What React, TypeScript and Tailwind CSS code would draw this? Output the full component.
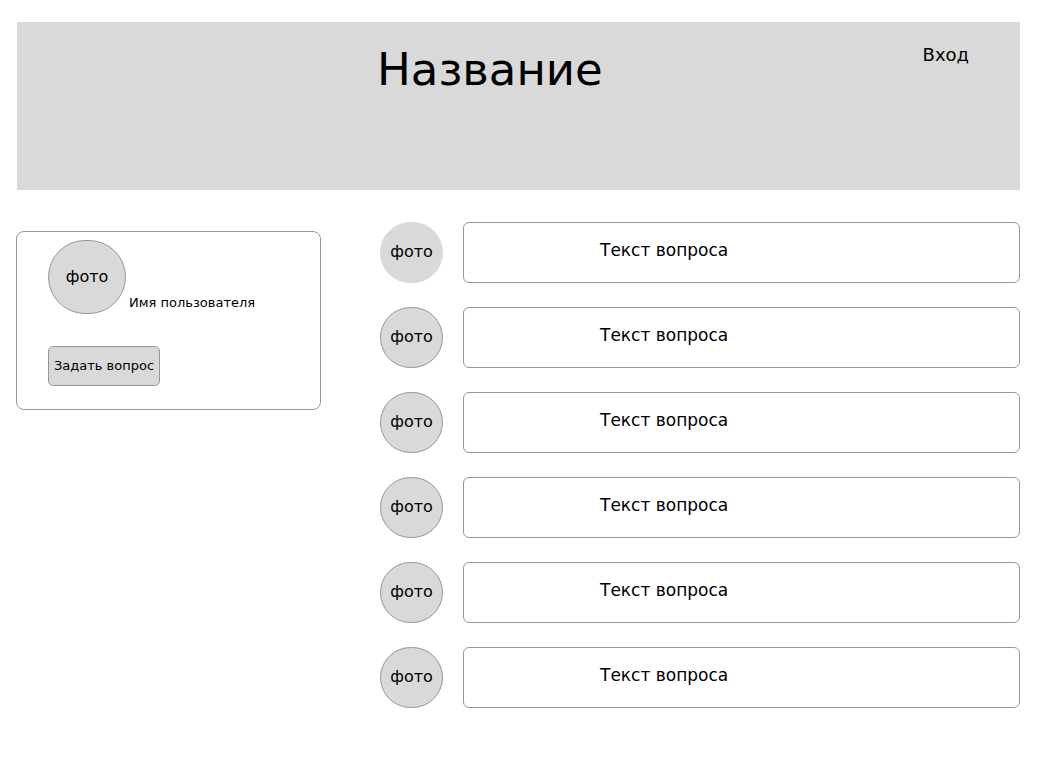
const font = { fontFamily: '"DejaVu Sans", "Liberation Sans", sans-serif' };

const Avatar = ({ bordered = true }: { bordered?: boolean }) => (
  <div
    className={`w-[63px] h-[61px] shrink-0 rounded-full bg-[#d9d9d9] flex items-center justify-center pb-[2px] text-[16px] text-black ${
      bordered ? 'border border-[#979797]' : ''
    }`}
  >
    фото
  </div>
);

const App = () => {
  const questions = [0, 1, 2, 3, 4, 5];

  return (
    <div className="w-[1042px] h-[776px] bg-white pl-[16px] pt-[22px]" style={font}>
      <header className="ml-[1px] w-[1003px] h-[168px] bg-[#d9d9d9] flex items-start">
        <h1 className="ml-[360px] mt-[25px] text-[45px] leading-[45px] text-black">Название</h1>
        <a className="ml-auto mr-[51px] mt-[22px] text-[18px] leading-[22px] text-black">Вход</a>
      </header>

      <div className="flex mt-[32px]">
        <aside className="w-[305px] h-[179px] mt-[9px] border border-[#979797] rounded-[8px] pl-[31px] pt-[8px]">
          <div className="flex items-end">
            <div className="w-[78px] h-[74px] rounded-full bg-[#d9d9d9] border border-[#979797] flex items-center justify-center text-[16px]">
              фото
            </div>
            <span className="ml-[3px] mb-[2px] text-[13px] leading-[18px]">Имя пользователя</span>
          </div>
          <button className="mt-[32px] w-[112px] h-[40px] bg-[#d9d9d9] border border-[#979797] rounded-[5px] text-[13px] text-black">
            Задать вопрос
          </button>
        </aside>

        <div className="ml-[59px] flex flex-col gap-[24px]">
          {questions.map((q) => (
            <div key={q} className="flex items-center gap-[20px]">
              <Avatar bordered={q !== 0} />
              <div className="w-[557px] h-[61px] border border-[#979797] rounded-[6px] flex items-center pl-[136px] pb-[3px] text-[17px] text-black">
                Текст вопроса
              </div>
            </div>
          ))}
        </div>
      </div>
    </div>
  );
};

export default App;
